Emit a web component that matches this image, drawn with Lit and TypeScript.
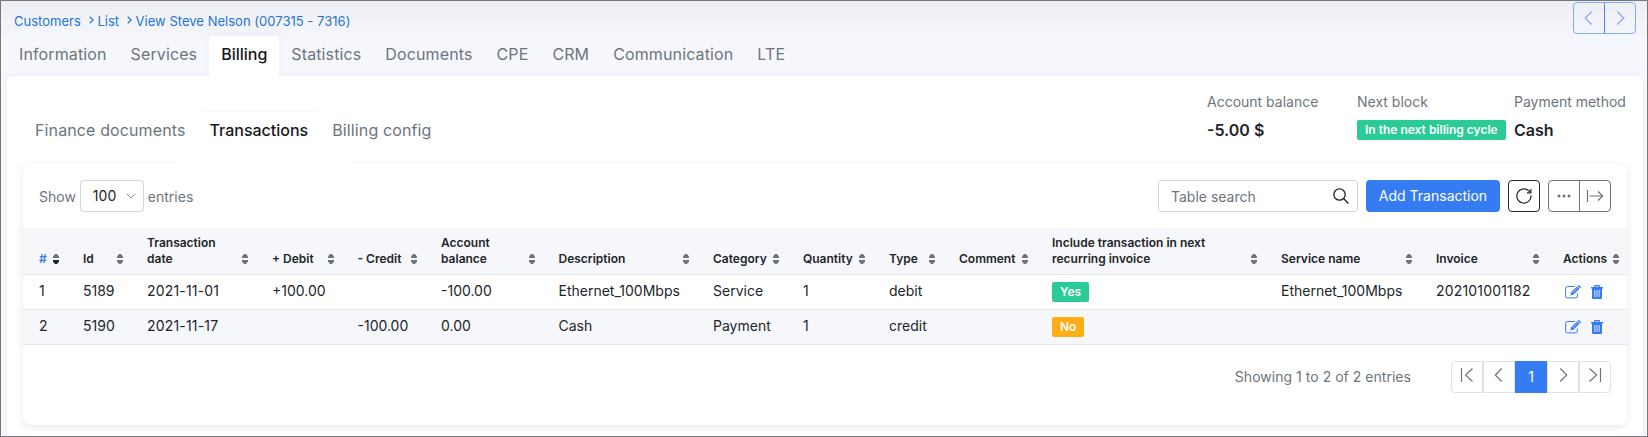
import { LitElement, html, css, svg } from "lit";
import { customElement } from "lit/decorators.js";
import { classMap } from "lit/directives/class-map.js";

const icon = (name: string, w: number, h: number, body: unknown) =>
  html`<svg class="icon ${name}" width=${w} height=${h} viewBox="0 0 ${w} ${h}" fill="none" stroke="currentColor">${body}</svg>`;

const sortIcon = () => icon("sort", 6, 10, svg`<path class="up" d="M2 0h2l2 2.6V4H0V2.6z" fill="#6c757d" stroke="none"/><path d="M0 6h6v1.4L4 10H2L0 7.4z" fill="currentColor" stroke="none"/>`);
const chevLeft = () => icon("chev", 16, 16, svg`<path d="M10.7 1.5 4.3 8l6.4 6.5" stroke-width="1.2"/>`);
const chevRight = () => icon("chev", 16, 16, svg`<path d="M5.3 1.5 11.7 8l-6.4 6.5" stroke-width="1.2"/>`);
const first = () => icon("chev", 16, 16, svg`<path d="M2.5 1v14 M13.5 1.5 6.5 8l7 6.5" stroke-width="1.2"/>`);
const last = () => icon("chev", 16, 16, svg`<path d="M13.5 1v14 M2.5 1.5l7 6.5-7 6.5" stroke-width="1.2"/>`);
const editIcon = () => icon("edit", 16, 14, svg`<path d="M9.8 1.5H2.600A2 2 0 0 0 .6 3.500v7.400A2 2 0 0 0 2.600 12.900h7.800a2 2 0 0 0 2-2V8.600" stroke-width="1"/><path d="M5.4 10.4l.7-3.2L12 1.500l2.500 2.300-5.900 5.800z M12.600 1l1-1c.4 0 2.400 1.800 2.400 2.200l-1 1.100z" fill="currentColor" stroke="none"/><path d="M7.500 8 12.200 3.300" stroke="#fff" stroke-width=".6"/>`);
const trashIcon = () => icon("trash", 12, 14, svg`<path d="M0 2h12v1.500H0z M1 3.500h10V13a1 1 0 0 1-1 1H2a1 1 0 0 1-1-1z" fill="currentColor" stroke="none"/><path d="M3.800 2V.6h4.400V2" stroke-width="1.200"/><path d="M3.800 5v7M6 5v7M8.200 5v7" stroke="#fff" stroke-width=".8"/>`);

const TABS = ["Information", "Services", "Billing", "Statistics", "Documents", "CPE", "CRM", "Communication", "LTE"];
const SUBTABS = ["Finance documents", "Transactions", "Billing config"];
const COLUMNS: [string, number][] = [
  ["#", 44], ["Id", 64], ["Transaction date", 125], ["+ Debit", 85.5], ["- Credit", 83.5],
  ["Account balance", 117.5], ["Description", 154.5], ["Category", 90], ["Quantity", 86], ["Type", 70],
  ["Comment", 93], ["Include transaction in next recurring invoice", 229], ["Service name", 155], ["Invoice", 127], ["Actions", 80],
];
const ROWS = [
  ["1", "5189", "2021-11-01", "+100.00", "", "-100.00", "Ethernet_100Mbps", "Service", "1", "debit", "", "Yes", "Ethernet_100Mbps", "202101001182"],
  ["2", "5190", "2021-11-17", "", "-100.00", "0.00", "Cash", "Payment", "1", "credit", "", "No", "", ""],
];
const DIGIT_COLUMNS = [2, 13];

@customElement("app-root")
export class AppRoot extends LitElement {
  static styles = css`
    :host { display: block; box-sizing: border-box; height: 437px; overflow: hidden; border: 1px solid #77767b;
      background: linear-gradient(#eeeff4, #f6f7fc 40px); font: 14px/20px Inter, sans-serif; color: #212529; }
    * { box-sizing: border-box; }
    .icon { display: block; flex: none; }
    .top { display: flex; justify-content: space-between; height: 35px; padding: 1px 11px 0 13px; }
    .crumbs { display: flex; align-items: center; height: 20px; margin-top: 9px; font-size: 13px; letter-spacing: .02px; color: #1f75d3; }
    .crumbs .icon { margin: -2px 3.5px 0 8px; }
    .pair { display: flex; width: 63px; height: 32px; border: 1px solid; border-radius: 4px; }
    .pair > * { flex: 1; display: flex; align-items: center; justify-content: center; }
    .pair > :first-child { border-right: 1px solid; }
    .nav { color: #84acf2; }
    .nav > :first-child { border-color: #4d87ec; }
    .tabs { display: flex; height: 40px; padding-left: 6px; font-size: 16px; color: #6c757d; }
    .tab { padding: 7px 12px 0; line-height: 22px; letter-spacing: .12px; }
    .tab.on { color: #16181b; background: #fff; border-radius: 4px 4px 0 0; font-weight: 500; letter-spacing: 0; box-shadow: 0 -2px 8px #0000000a; clip-path: inset(-10px -10px 0); }
    .panel { height: 380px; margin: 0 4px 0 6px; padding: 0 16px; background: #fff; border-radius: 6px 6px 0 0; box-shadow: 0 0 6px #0000000a; }
    .head { display: flex; justify-content: space-between; height: 88px; }
    .subtabs { display: flex; align-self: flex-start; margin-top: 36px; height: 40px; font-size: 16px; color: #6c757d; }
    .subtabs .tab { padding-top: 7px; }
    .subtabs .on { position: relative; box-shadow: 0 -3px 5px -2px #0000000a; clip-path: none; }
    .subtabs .on::after { content: ""; position: absolute; left: -22px; right: -30px; bottom: -18px; height: 18px; background: #fff; }
    .stats { display: grid; grid-template-columns: 150px 157px 113px; align-content: start; color: #6c757d; padding-top: 16px; }
    .stat { display: flex; flex-direction: column; align-items: flex-start; white-space: nowrap; }
    .stat b { font-size: 16px; font-weight: 600; color: #212529; margin-top: 8px; }
    .badge { display: inline-block; height: 20px; padding: 0 8px; border-radius: 2px; font: 600 12px/19px Inter, sans-serif; color: #fff; background: #2acb96; }
    .badge.no { background: #ffad16; }
    .stat .badge { margin-top: 8px; }
    .card { height: 261px; border-radius: 8px; box-shadow: 0 2px 8px #00000018, 0 0 1px #0000000c; }
    .tools { display: flex; align-items: center; height: 64px; color: #6c757d; padding: 0 16px; }
    .tools .grow { flex: 1; }
    .label { padding-top: 2px; }
    .select { display: flex; align-items: center; justify-content: space-between; width: 64px; height: 32px; margin: 0 4px; padding: 0 7px 1px 12px; border: 1px solid #ced4da; border-radius: 4px; color: #212529; }
    .select .icon { color: #868e96; }
    .search { display: flex; align-items: center; justify-content: space-between; width: 200px; height: 32px; padding: 1px 8px 0 12px; border: 1px solid #ced4da; border-radius: 4px; }
    .search .icon { color: #212529; margin-top: -2px; }
    .add { width: 134px; height: 32px; margin: 0 8px; border-radius: 4px; background: #357bf2; color: #fff; text-align: center; line-height: 31px; }
    .refresh { display: flex; align-items: center; justify-content: center; width: 32px; height: 32px; margin-right: 8px; border: 1px solid #212529; border-radius: 4px; color: #212529; }
    table { width: 1604px; border-collapse: separate; border-spacing: 0; table-layout: fixed; }
    th { height: 47px; padding: 6px 8px 7px 16px; text-align: left; vertical-align: bottom; background: #f6f7fb; border-bottom: 1px solid #e4e8ed; font-size: 12px; line-height: 16px; font-weight: 600; }
    .th { display: flex; align-items: flex-end; justify-content: space-between; }
    .th .sort { margin-bottom: 3px; color: #6c757d; }
    .th.wide span { max-width: 170px; }
    .th.slim span { max-width: 80px; }
    .th.key { color: #357bf2; }
    .th.key .sort { color: #212529; }
    td { height: 35px; padding: 0 0 2px 16px; border-bottom: 1px solid #e4e8ed; white-space: nowrap; }
    td.digits { letter-spacing: .18px; font-kerning: none; }
    tr.alt td { background: #f6f7fb; }
    td.flag { padding: 0 0 0 16px; line-height: 0; }
    .acts { display: flex; gap: 10px; padding: 1px 0 0 2px; color: #357bf2; }
    .foot { display: flex; align-items: center; justify-content: flex-end; height: 32px; margin-top: 16px; padding-right: 16px; color: #6c757d; letter-spacing: .03px; }
    .pages { display: flex; margin-left: 40px; border-radius: 4px; }
    .page { display: flex; align-items: center; justify-content: center; width: 32px; height: 32px; border: 1px solid #dee2e6; }
    .page .icon { margin-top: -4px; }
    .page:first-child { border-radius: 4px 0 0 4px; }
    .page:last-child { border-radius: 0 4px 4px 0; }
    .page.on { background: #357bf2; border-color: #357bf2; color: #fff; }
  `;

  render() {
    const arrow = () => icon("", 5, 8, svg`<path d="M.7.700 4.200 4 .7 7.300" stroke-width="1.200"/>`);
    return html`
      <div class="top">
        <div class="crumbs">Customers ${arrow()}List ${arrow()}View Steve Nelson (007315 - 7316)</div>
        <div class="pair nav"><span>${chevLeft()}</span><span>${chevRight()}</span></div>
      </div>
      <div class="tabs">${TABS.map((t) => html`<span class=${classMap({ tab: true, on: t === "Billing" })}>${t}</span>`)}</div>
      <div class="panel">
        <div class="head">
          <div class="subtabs">${SUBTABS.map((t) => html`<span class=${classMap({ tab: true, on: t === "Transactions" })}>${t}</span>`)}</div>
          <div class="stats">
            <div class="stat">Account balance<b>-5.00 $</b></div>
            <div class="stat">Next block<span class="badge">In the next billing cycle</span></div>
            <div class="stat">Payment method<b>Cash</b></div>
          </div>
        </div>
        <div class="card">
          <div class="tools">
            <span class="label">Show</span><div class="select">100${icon("", 10, 6, svg`<path d="M.8.800 5 5 9.200.8"/>`)}</div><span class="label">entries</span>
            <span class="grow"></span>
            <div class="search">Table search${icon("", 16, 16, svg`<circle cx="6.500" cy="6.500" r="5.700" stroke-width="1.300"/><path d="M10.600 10.600 15.400 15.400" stroke-width="1.400"/>`)}</div>
            <div class="add">Add Transaction</div>
            <div class="refresh">${icon("", 16, 16, svg`<path d="M15 7.200A7.100 7.100 0 1 1 12.800 2.800L14.400 4.300" stroke-width="1.200"/><path d="M14.900 1V4.800H11" stroke-width="1.200"/>`)}</div>
            <div class="pair">
              <span>${icon("", 14, 4, svg`<g fill="currentColor" stroke="none"><circle cx="2" cy="2" r="1.500"/><circle cx="7" cy="2" r="1.500"/><circle cx="12" cy="2" r="1.500"/></g>`)}</span>
              <span>${icon("", 18, 12, svg`<path d="M1.500 0v12 M3.500 6H16.500 M12 1.500 16.700 6 12 10.500" stroke-width="1.200"/>`)}</span>
            </div>
          </div>
          <table>
            <colgroup>${COLUMNS.map(([, w]) => html`<col width=${w} />`)}</colgroup>
            <thead><tr>${COLUMNS.map(([t], i) => html`<th><div class=${classMap({ th: true, key: i === 0, wide: i === 11, slim: i === 2 || i === 5 })}><span>${t}</span>${sortIcon()}</div></th>`)}</tr></thead>
            <tbody>${ROWS.map((r, i) => html`<tr class=${i ? "alt" : ""}>
              ${r.map((c, j) => (j === 11 ? html`<td class="flag"><span class="badge ${c.toLowerCase()}">${c}</span></td>` : html`<td class=${classMap({ digits: DIGIT_COLUMNS.includes(j) })}>${c}</td>`))}
              <td><div class="acts">${editIcon()}${trashIcon()}</div></td></tr>`)}</tbody>
          </table>
          <div class="foot">Showing 1 to 2 of 2 entries
            <div class="pages"><span class="page">${first()}</span><span class="page">${chevLeft()}</span><span class="page on">1</span><span class="page">${chevRight()}</span><span class="page">${last()}</span></div>
          </div>
        </div>
      </div>`;
  }
}
